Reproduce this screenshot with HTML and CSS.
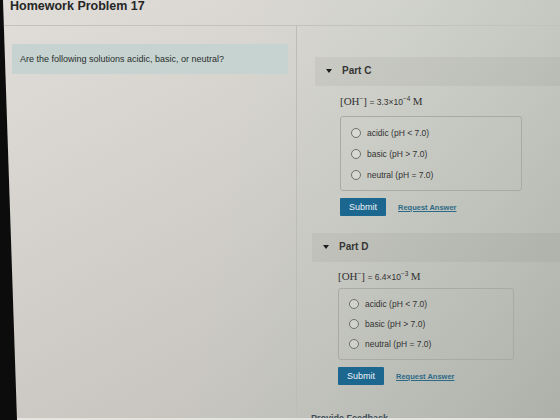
FILE: index.html
```html
<!DOCTYPE html>
<html lang="en">
<head>
<meta charset="utf-8">
<title>Homework Problem 17</title>
<link rel="stylesheet" href="styles.css">
</head>
<body>
<div class="screen">
  <header class="top">
    <h1 class="title">Homework Problem 17</h1>
  </header>
  <div class="cols">
    <section class="left">
      <div class="question">Are the following solutions acidic, basic, or neutral?</div>
    </section>
    <section class="right">
      <div class="part">
        <div class="part-head"><span class="caret"></span><span class="part-name">Part C</span></div>
        <div class="part-body">
          <div class="formula"><span class="ser">[OH<sup>−</sup>]</span> = 3.3×10<sup>−4</sup> <span class="ser">M</span></div>
          <div class="choices">
            <label class="choice"><span class="radio"></span>acidic (pH &lt; 7.0)</label>
            <label class="choice"><span class="radio"></span>basic (pH &gt; 7.0)</label>
            <label class="choice"><span class="radio"></span>neutral (pH = 7.0)</label>
          </div>
          <div class="actions">
            <button class="submit">Submit</button>
            <a class="request">Request Answer</a>
          </div>
        </div>
      </div>
      <div class="part part-d">
        <div class="part-head"><span class="caret"></span><span class="part-name">Part D</span></div>
        <div class="part-body">
          <div class="formula"><span class="ser">[OH<sup>−</sup>]</span> = 6.4×10<sup>−3</sup> <span class="ser">M</span></div>
          <div class="choices">
            <label class="choice"><span class="radio"></span>acidic (pH &lt; 7.0)</label>
            <label class="choice"><span class="radio"></span>basic (pH &gt; 7.0)</label>
            <label class="choice"><span class="radio"></span>neutral (pH = 7.0)</label>
          </div>
          <div class="actions">
            <button class="submit">Submit</button>
            <a class="request">Request Answer</a>
          </div>
        </div>
      </div>
      <div class="feedback">Provide Feedback</div>
    </section>
  </div>
</div>
</body>
</html>
```

FILE: styles.css
```css
html, body {
  margin: 0;
  padding: 0;
  width: 560px;
  height: 420px;
  overflow: hidden;
  background: #0c0c0c;
  font-family: "Liberation Sans", Arial, sans-serif;
  color: #2b2b2b;
}

/* monitor area, with the dark bezel showing down the left edge */
.screen {
  width: 560px;
  height: 420px;
  box-sizing: border-box;
  border-bottom: 2px solid #e4e4e0;
  clip-path: polygon(3px 0, 100% 0, 100% 100%, 17px 100%);
  background:
    linear-gradient(to bottom, rgba(255,255,255,0.08), rgba(0,0,0,0.07)),
    linear-gradient(100deg, #dedbd6 0%, #d7d4ce 40%, #cdcfc8 62%, #c2c6be 85%, #babeb6 100%);
  display: flex;
  flex-direction: column;
  overflow: hidden;
}

.top {
  height: 25px;
  border-bottom: 1px solid #c4c2bd;
  flex: none;
}

.title {
  margin: -1px 0 0 10px;
  font-size: 12.5px;
  font-weight: bold;
  color: #262626;
  line-height: 14px;
}

.cols {
  flex: 1;
  display: flex;
  min-height: 0;
}

.left {
  width: 297px;
  border-right: 1px solid #bdbcb7;
  padding: 18px 0 0 12px;
  box-sizing: border-box;
  flex: none;
}

.question {
  width: 276px;
  height: 30px;
  box-sizing: border-box;
  background: #c6d3d0;
  font-size: 9px;
  padding-left: 8px;
  line-height: 30px;
  color: #2a2e2e;
}

.right {
  flex: 1;
  padding: 31px 0 0 18px;
  display: flex;
  flex-direction: column;
  overflow: hidden;
}

.part-head {
  height: 29px;
  background: rgba(60, 60, 50, 0.06);
  display: flex;
  align-items: center;
  padding-left: 11px;
}

.caret {
  width: 0;
  height: 0;
  border-left: 3.5px solid transparent;
  border-right: 3.5px solid transparent;
  border-top: 4px solid #1c1c1c;
  margin-right: 10px;
  margin-top: -2px;
}

.part-name {
  font-size: 10px;
  font-weight: bold;
  color: #363636;
  margin-top: -2px;
}

.part-body {
  padding-left: 25px;
}

.formula {
  margin-top: 8px;
  height: 14px;
  line-height: 14px;
  font-size: 8.5px;
  color: #333;
}

.formula .ser {
  font-family: "Liberation Serif", "Times New Roman", serif;
  font-size: 11px;
}

.formula sup {
  font-size: 6.5px;
  line-height: 0;
  vertical-align: 4px;
}

.formula .ser sup {
  font-family: "Liberation Sans", Arial, sans-serif;
}

.choices {
  margin-top: 8px;
  width: 182px;
  height: 75px;
  box-sizing: border-box;
  border: 1px solid #a9aaa4;
  border-radius: 3px;
  padding: 5px 0 0 10px;
  display: flex;
  flex-direction: column;
}

.choice {
  height: 21px;
  display: flex;
  align-items: center;
  font-size: 8.5px;
  color: #333;
}

.radio {
  width: 8px;
  height: 8px;
  border: 1px solid #6f6f6c;
  border-radius: 50%;
  background: rgba(255,255,255,0.25);
  margin-right: 6px;
  flex: none;
}

.actions {
  margin-top: 7px;
  display: flex;
  align-items: center;
  height: 18px;
}

.submit {
  width: 46px;
  height: 18px;
  border: none;
  border-radius: 1px;
  background: #1b6790;
  color: #eef3f5;
  font-family: "Liberation Sans", Arial, sans-serif;
  font-size: 9px;
  padding: 0;
  margin-right: 12px;
}

.request {
  font-size: 7.5px;
  font-weight: bold;
  color: #2c6a86;
  text-decoration: underline;
}

.part-d {
  margin-top: 17px;
}

.part-d .part-head {
  margin-left: -3px;
}

.part-d .part-body {
  padding-left: 23px;
}

.part-d .formula {
  margin-top: 7px;
}

.part-d .choices {
  margin-top: 5px;
  width: 176px;
  height: 72px;
}

.part-d .choice {
  height: 20px;
}

.part-d .actions {
  margin-top: 7px;
}

.feedback {
  margin-top: 28px;
  margin-left: -4px;
  font-size: 9px;
  font-weight: bold;
  color: #3e4c58;
  flex: none;
}
```
